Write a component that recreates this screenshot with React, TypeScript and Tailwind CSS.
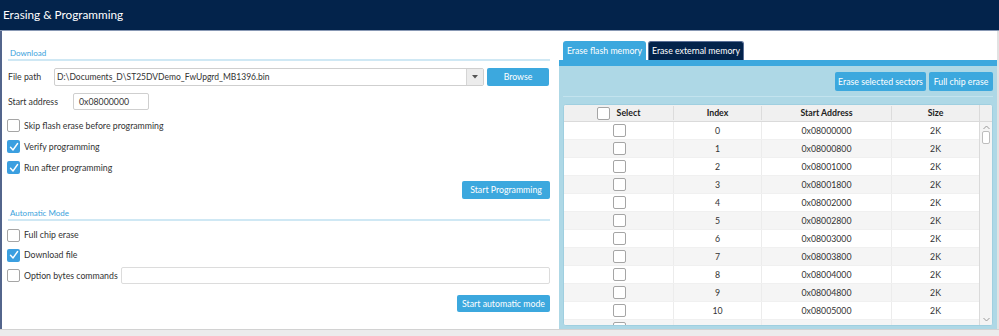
import React from "react";

const font = { fontFamily: 'Lato, "Noto Sans", sans-serif' };

interface Sector {
  index: number;
  address: string;
  size: string;
}

const sectors: Sector[] = Array.from({ length: 12 }, (_, i) => ({
  index: i,
  address: "0x" + (0x08000000 + i * 0x800).toString(16).toUpperCase().padStart(8, "0"),
  size: "2K",
}));

const CheckBox: React.FC<{ checked?: boolean }> = ({ checked }) =>
  checked ? (
    <span className="flex h-[13px] w-[13px] shrink-0 items-center justify-center rounded-[2px] bg-[#3b9fe0]">
      <svg width="10" height="10" viewBox="0 0 10 10" fill="none">
        <path d="M1.5 5.2 L4 8 L8.6 1.5" stroke="white" strokeWidth="1.4" strokeLinecap="round" strokeLinejoin="round" />
      </svg>
    </span>
  ) : (
    <span className="block h-[13px] w-[13px] shrink-0 rounded-[2px] border border-[#a5a5a5] bg-white" />
  );

const CheckRow: React.FC<{ label: string; checked?: boolean; h: string; children?: React.ReactNode }> = ({
  label,
  checked,
  h,
  children,
}) => (
  <div className={`flex items-center ${h}`}>
    <span className="-ml-[1px]">
      <CheckBox checked={checked} />
    </span>
    <span className="ml-[4px] whitespace-nowrap text-[#333]">{label}</span>
    {children}
  </div>
);

const SectionTitle: React.FC<{ title: string }> = ({ title }) => (
  <div className="border-b-2 border-[#cfe8f4] pl-[2px] text-[8px] leading-[12px] text-[#3aa2dc]">{title}</div>
);

const BlueButton: React.FC<{ label: string; w: string; h?: string }> = ({ label, w, h = "h-[18px]" }) => (
  <button className={`${w} ${h} whitespace-nowrap rounded-[2px] bg-[#3ca8de] text-[8.75px] text-white`}>{label}</button>
);

export default function App() {
  return (
    <div style={font} className="flex h-[336px] w-[999px] flex-col overflow-hidden bg-white text-[8.75px] text-[#333]">
      {/* Header */}
      <div className="flex h-[31px] shrink-0 items-center border-b border-[#8898b4] bg-[#03234b] pl-[3px] text-[11.75px] text-white">
        Erasing &amp; Programming
      </div>

      <div className="flex h-[298px] border-l-2 border-r-2 border-l-[#53658c] border-r-[#e2e2e2]">
        {/* Left panel */}
        <div className="ml-[6px] flex w-[542px] flex-col pt-[16px]">
          <SectionTitle title="Download" />
          <div className="mt-[7px] flex h-[18px] items-center">
            <span className="w-[46px] text-[#333]">File path</span>
            <div className="flex h-[18px] w-[430px] items-center rounded-[2px] border border-[#cfcfcf] bg-white">
              <span className="flex-1 pl-[2px] text-[8.5px]">D:\Documents_D\ST25DVDemo_FwUpgrd_MB1396.bin</span>
              <span className="flex h-full w-[17px] items-center justify-center border-l border-[#d5d5d5] bg-[#ececec]">
                <svg width="6" height="4" viewBox="0 0 6 4">
                  <path d="M0 0 H6 L3 3.5 Z" fill="#555" />
                </svg>
              </span>
            </div>
            <span className="ml-[3px]">
              <BlueButton label="Browse" w="w-[62px]" />
            </span>
          </div>
          <div className="mt-[7px] flex h-[17px] items-center">
            <span className="w-[65px]">Start address</span>
            <div className="flex h-[17px] w-[76px] items-center rounded-[2px] border border-[#cfcfcf] pl-[5px]">
              0x08000000
            </div>
          </div>
          <div className="mt-[5px]">
            <CheckRow label="Skip flash erase before programming" h="h-[21px]" />
            <CheckRow label="Verify programming" checked h="h-[21px]" />
            <CheckRow label="Run after programming" checked h="h-[21px]" />
          </div>
          <div className="mt-[3px] flex justify-end">
            <BlueButton label="Start Programming" w="w-[88px]" />
          </div>

          <div className="mt-[8px]">
            <SectionTitle title="Automatic Mode" />
          </div>
          <div className="mt-[4px]">
            <CheckRow label="Full chip erase" h="h-[20px]" />
            <CheckRow label="Download file" checked h="h-[20px]" />
            <CheckRow label="Option bytes commands" h="h-[21px]">
              <div className="ml-[3px] h-[17px] flex-1 rounded-[2px] border border-[#dcdcdc]" />
            </CheckRow>
          </div>
          <div className="mt-[9px] flex justify-end">
            <BlueButton label="Start automatic mode" w="w-[93px]" h="h-[17px]" />
          </div>
        </div>

        {/* Right panel */}
        <div className="ml-[9px] flex flex-1 flex-col pt-[10px]">
          <div className="flex h-[19px] items-end gap-[2px] pl-[4px]">
            <div className="flex h-[19px] w-[83px] items-center justify-center whitespace-nowrap rounded-t-[3px] bg-[#3ca8de] text-white">
              Erase flash memory
            </div>
            <div className="flex h-[19px] w-[96px] items-center justify-center whitespace-nowrap rounded-t-[3px] border border-b-0 border-[#5a6f96] bg-[#03234b] text-white">
              Erase external memory
            </div>
          </div>
          <div className="h-[6px] bg-[#3ca8de]" />
          <div className="flex flex-1 flex-col bg-[#aed8e6] px-[4px]">
            <div className="flex h-[31px] items-start justify-end gap-[3px] border-b border-[#c3e3ee] pt-[6px]">
              <BlueButton label="Erase selected sectors" w="w-[91px]" h="h-[19px]" />
              <BlueButton label="Full chip erase" w="w-[64px]" h="h-[19px]" />
            </div>
            <div className="mt-[7px] flex h-[222px] overflow-hidden rounded-[3px] border border-[#9fcfe0] bg-white">
              <div className="flex flex-1 flex-col">
                <div className="flex h-[17px] shrink-0 items-center border-b border-[#dadada] bg-[#f0f0f0] font-bold text-[#222]">
                  <div className="flex w-[110px] items-center justify-center gap-[7px] border-r border-[#dcdcdc]">
                    <CheckBox />
                    <span>Select</span>
                  </div>
                  <div className="w-[88px] border-r border-[#dcdcdc] text-center">Index</div>
                  <div className="w-[130px] border-r border-[#dcdcdc] text-center">Start Address</div>
                  <div className="flex-1 text-center">Size</div>
                </div>
                {sectors.map((s) => (
                  <div
                    key={s.index}
                    className={`flex h-[18px] shrink-0 items-center border-b border-[#f0f0f0] ${
                      s.index % 2 === 1 ? "bg-[#f5f5f5]" : "bg-white"
                    }`}
                  >
                    <div className="flex h-full w-[110px] items-center justify-center border-r border-[#ececec] pl-[2px]">
                      <CheckBox />
                    </div>
                    <div className="flex h-full w-[88px] items-center justify-center border-r border-[#ececec]">{s.index}</div>
                    <div className="flex h-full w-[130px] items-center justify-center border-r border-[#ececec]">{s.address}</div>
                    <div className="flex-1 text-center">{s.size}</div>
                  </div>
                ))}
              </div>
              {/* scrollbar */}
              <div className="flex w-[13px] flex-col border-l border-[#dadada] bg-[#f0f0f0]">
                <div className="h-[17px] border-b border-[#dadada]" />
                <div className="flex flex-1 flex-col items-center bg-[#f4f4f4] pt-[3px]">
                  <svg width="7" height="5" viewBox="0 0 7 5">
                    <path d="M0.5 4 L3.5 1 L6.5 4" stroke="#999" fill="none" />
                  </svg>
                  <div className="mt-[1px] h-[13px] w-[8px] rounded-[2px] border border-[#bdbdbd] bg-white" />
                  <div className="flex-1" />
                  <svg width="7" height="5" viewBox="0 0 7 5" className="mb-[3px]">
                    <path d="M0.5 1 L3.5 4 L6.5 1" stroke="#999" fill="none" />
                  </svg>
                </div>
              </div>
            </div>
          </div>
        </div>
      </div>

      {/* Footer strip */}
      <div className="flex-1 border-t border-[#d2d2d2] bg-[#ececec]" />
    </div>
  );
}
